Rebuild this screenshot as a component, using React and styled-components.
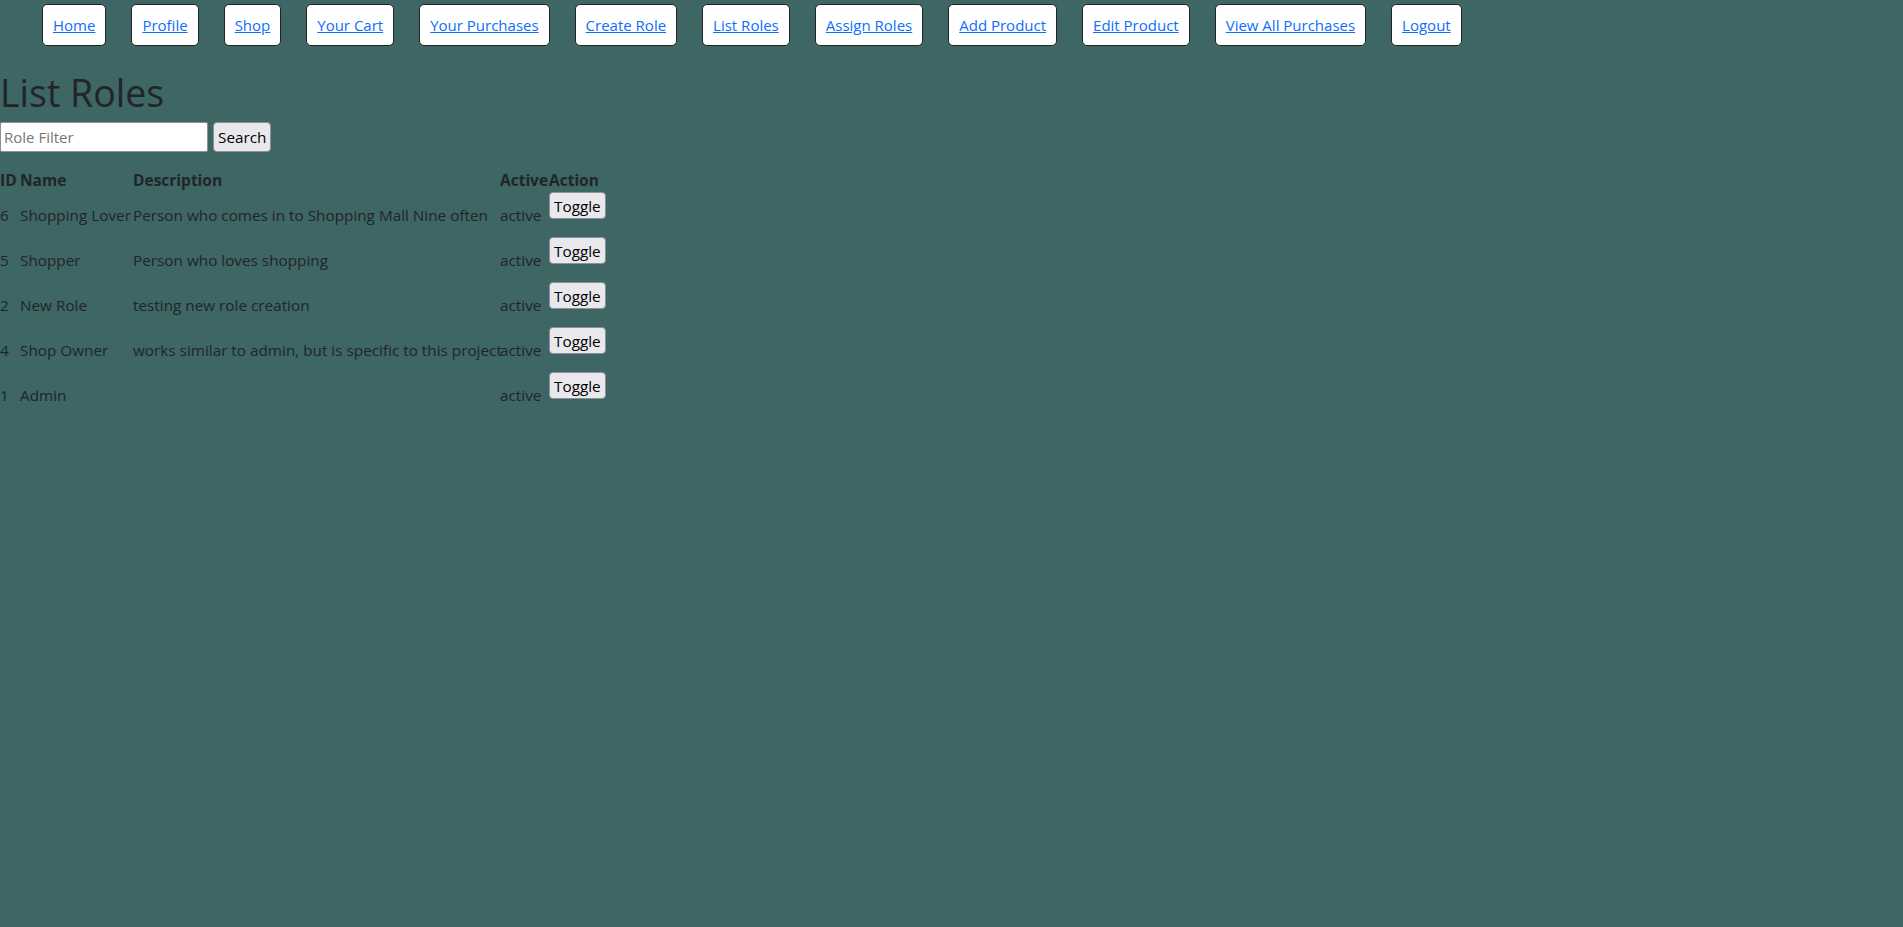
import React, { useState } from 'react';
import styled, { createGlobalStyle } from 'styled-components';

const GlobalStyle = createGlobalStyle`
  html, body {
    margin: 0;
    padding: 0;
    background: #3d6664;
  }
  body {
    font-family: "Open Sans", "Noto Sans", sans-serif;
    font-size: 15px;
    line-height: 24px;
    color: #212529;
    min-height: 100vh;
  }
`;

const links = [
  'Home',
  'Profile',
  'Shop',
  'Your Cart',
  'Your Purchases',
  'Create Role',
  'List Roles',
  'Assign Roles',
  'Add Product',
  'Edit Product',
  'View All Purchases',
  'Logout',
];

const columns = [
  { label: 'ID', width: 20 },
  { label: 'Name', width: 113 },
  { label: 'Description', width: 367 },
  { label: 'Active', width: 49 },
  { label: 'Action', width: 59 },
];

const initialRoles = [
  { id: 6, name: 'Shopping Lover', description: 'Person who comes in to Shopping Mall Nine often', active: true },
  { id: 5, name: 'Shopper', description: 'Person who loves shopping', active: true },
  { id: 2, name: 'New Role', description: 'testing new role creation', active: true },
  { id: 4, name: 'Shop Owner', description: 'works similar to admin, but is specific to this project', active: true },
  { id: 1, name: 'Admin', description: '', active: true },
];

export default function App() {
  const [roles, setRoles] = useState(initialRoles);
  const [filter, setFilter] = useState('');

  const toggle = (id) => {
    setRoles(roles.map((r) => (r.id === id ? { ...r, active: !r.active } : r)));
  };

  return (
    <Page>
      <GlobalStyle />
      <NavList>
        {links.map((label) => (
          <NavItem key={label}>
            <NavLink href="#">{label}</NavLink>
          </NavItem>
        ))}
      </NavList>
      <Title>List Roles</Title>
      <FilterForm onSubmit={(e) => e.preventDefault()}>
        <FilterInput
          placeholder="Role Filter"
          value={filter}
          onChange={(e) => setFilter(e.target.value)}
        />
        <PlainButton type="submit" $tall>
          Search
        </PlainButton>
      </FilterForm>
      <RolesTable>
        <colgroup>
          {columns.map((c) => (
            <Col key={c.label} $width={c.width} />
          ))}
        </colgroup>
        <thead>
          <tr>
            {columns.map((c) => (
              <HeadCell key={c.label}>{c.label}</HeadCell>
            ))}
          </tr>
        </thead>
        <tbody>
          {roles.map((role) => (
            <tr key={role.id}>
              <Cell>{role.id}</Cell>
              <Cell>{role.name}</Cell>
              <Cell>{role.description}</Cell>
              <Cell>{role.active ? 'active' : 'inactive'}</Cell>
              <Cell>
                <ToggleForm onSubmit={(e) => e.preventDefault()}>
                  <PlainButton type="button" onClick={() => toggle(role.id)}>
                    Toggle
                  </PlainButton>
                </ToggleForm>
              </Cell>
            </tr>
          ))}
        </tbody>
      </RolesTable>
    </Page>
  );
}

const Page = styled.div`
  padding: 0;
`;

const NavList = styled.ul`
  list-style: none;
  display: flex;
  flex-wrap: wrap;
  gap: 25px;
  margin: 4px 0 0;
  padding: 0 0 0 42px;
`;

const NavItem = styled.li`
  background: #fff;
  border: 1px solid #222;
  border-radius: 5px;
  padding: 8px 10px 8px 10px;
  line-height: 24px;
`;

const NavLink = styled.a`
  color: #0d6efd;
  text-decoration: underline;
`;

const Title = styled.h1`
  font-size: 37.5px;
  font-weight: 400;
  line-height: 48px;
  margin: 23px 0 5px;
`;

const FilterForm = styled.form`
  display: flex;
  align-items: center;
  gap: 5px;
  margin: 0 0 16px;
`;

const FilterInput = styled.input`
  box-sizing: border-box;
  width: 208px;
  height: 30px;
  border: 1px solid #8f8f9d;
  border-radius: 2px;
  padding: 1px 3px;
  font-family: inherit;
  font-size: 15px;
  color: #000;
  background: #fff;
  &::placeholder {
    color: #767676;
  }
`;

const PlainButton = styled.button`
  box-sizing: border-box;
  height: ${(p) => (p.$tall ? '30px' : '27px')};
  padding: 0 4px;
  border: 1px solid #8f8f9d;
  border-radius: 4px;
  background: #e9e9ed;
  color: #000;
  font-family: inherit;
  font-size: 15.3px;
  line-height: 20px;
  cursor: pointer;
`;

const RolesTable = styled.table`
  border-collapse: collapse;
  table-layout: fixed;
  width: 608px;
`;

const Col = styled.col`
  width: ${(p) => p.$width}px;
`;

const HeadCell = styled.th`
  padding: 0;
  text-align: left;
  font-weight: 700;
  font-size: 15.5px;
  line-height: 24px;
  white-space: nowrap;
`;

const Cell = styled.td`
  padding: 0;
  font-size: 15.3px;
  vertical-align: middle;
  white-space: nowrap;
`;

const ToggleForm = styled.form`
  margin: 0 0 18px;
  display: flex;
`;
